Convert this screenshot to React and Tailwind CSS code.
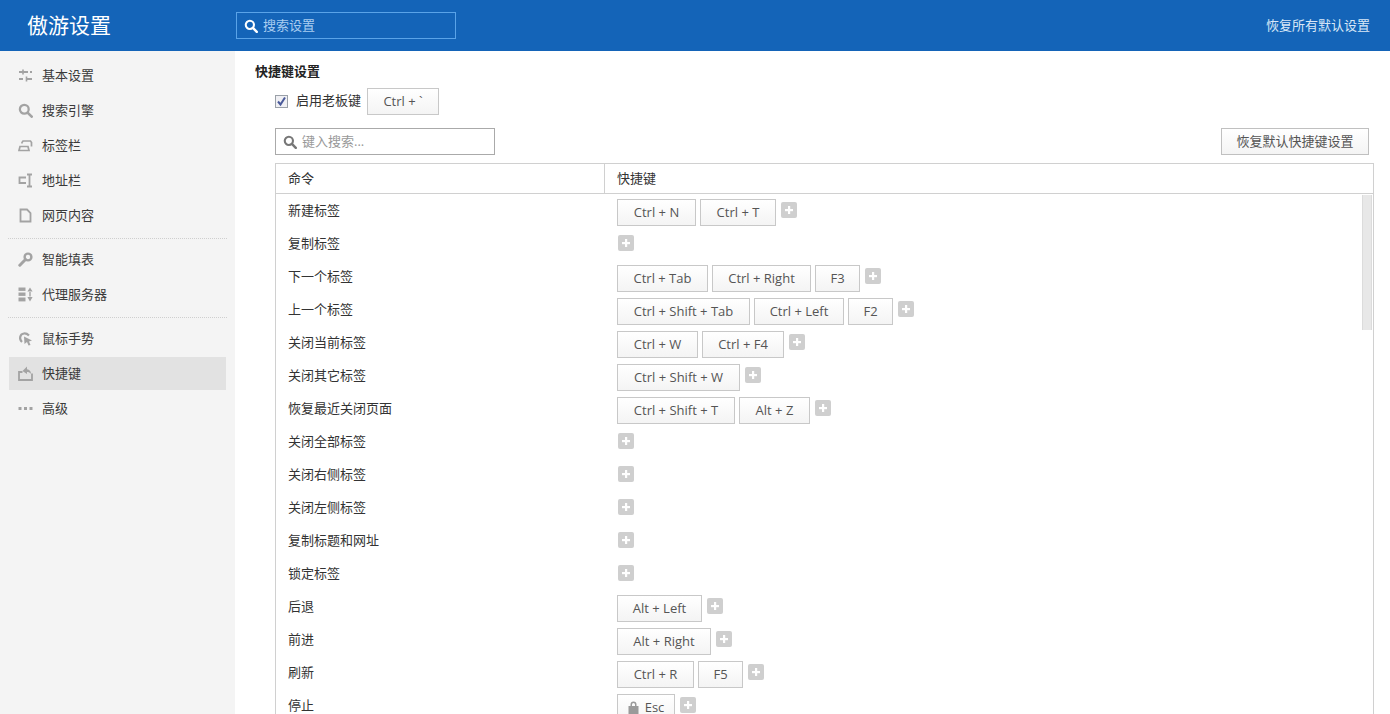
import React from "react";

const Search = ({ c = "currentColor", s = 15 }) => (
  <svg width={s} height={s} viewBox="0 0 16 16" fill="none" className="shrink-0">
    <circle cx="6.7" cy="6.7" r="4.7" stroke={c} strokeWidth="2.4" />
    <path d="M10.2 10.2L14.6 14.6" stroke={c} strokeWidth="2.8" strokeLinecap="round" />
  </svg>
);

const G = "#a3a3a3";
const icons = {
  sliders: (
    <svg width="15" height="15" viewBox="0 0 15 15" fill="none" stroke={G} strokeWidth="2">
      <path d="M1 4h9M1 11h4M9 11h5M12 4h2" />
      <path d="M5 1.5v5M8.5 8.5v5" strokeWidth="1.6" />
    </svg>
  ),
  search: <Search c={G} s={15} />,
  tabs: (
    <svg width="15" height="15" viewBox="0 0 15 15" fill="none" stroke={G} strokeWidth="1.7">
      <path d="M4 5.5V4.4L5 3h7.5l1 1.4V8.5" />
      <path d="M1 12.5l1-4h8l1 4z" fill="none" />
    </svg>
  ),
  addr: (
    <svg width="15" height="15" viewBox="0 0 15 15" fill="none" stroke={G} strokeWidth="1.8">
      <path d="M8 4.5H1.5v5.5H8" />
      <path d="M9 1.5h5M11.5 1.5v12M9 13.5h5" />
    </svg>
  ),
  page: (
    <svg width="15" height="15" viewBox="0 0 15 15" fill="none" stroke={G} strokeWidth="1.8">
      <path d="M2.5 1.5h6.5l3.5 3.5v8.5h-10z" />
    </svg>
  ),
  key: (
    <svg width="15" height="15" viewBox="0 0 15 15" fill="none">
      <circle cx="10" cy="5" r="3.4" stroke={G} strokeWidth="2.4" />
      <path d="M7.5 7.5L1.8 13.2" stroke={G} strokeWidth="3" strokeLinecap="round" />
    </svg>
  ),
  proxy: (
    <svg width="15" height="15" viewBox="0 0 15 15" fill={G}>
      <rect x="0.5" y="0.5" width="7" height="3.4" />
      <rect x="0.5" y="5.5" width="7" height="3.4" />
      <rect x="0.5" y="10.5" width="7" height="3.9" />
      <path d="M12 0.5l2.6 4h-5.2zM9.4 10h5.2L12 14.5z" />
      <rect x="11.3" y="5" width="1.4" height="4.5" />
    </svg>
  ),
  mouse: (
    <svg width="15" height="15" viewBox="0 0 15 15" fill="none">
      <path d="M4 11C1 8.5 1.500 3 6 2.500c2-.2 3.500.5 5 2" stroke={G} strokeWidth="2.200" />
      <path d="M6 5.500l8 4-3 1 1.500 3.500-2 .5-1.500-3.500-2.500 2z" fill={G} />
    </svg>
  ),
  shortcut: (
    <svg width="15" height="15" viewBox="0 0 15 15" fill="none">
      <path d="M4.500 6H1v8h13V7.500" stroke={G} strokeWidth="1.800" />
      <path d="M9 .5L4.500 5 9 8V6c1.500 0 3 .5 4 2C13 5 11.500 3.500 9 3.200z" fill={G} />
    </svg>
  ),
  more: (
    <svg width="15" height="15" viewBox="0 0 15 15" fill={G}>
      <rect x="0.5" y="6" width="3" height="3" />
      <rect x="6" y="6" width="3" height="3" />
      <rect x="11.500" y="6" width="3" height="3" />
    </svg>
  ),
};

const navGroups = [
  [["sliders", "基本设置"], ["search", "搜索引擎"], ["tabs", "标签栏"], ["addr", "地址栏"], ["page", "网页内容"]],
  [["key", "智能填表"], ["proxy", "代理服务器"]],
  [["mouse", "鼠标手势"], ["shortcut", "快捷键", true], ["more", "高级"]],
];

const rows = [
  ["新建标签", [["Ctrl + N", 79], ["Ctrl + T", 76]]],
  ["复制标签", []],
  ["下一个标签", [["Ctrl + Tab", 91], ["Ctrl + Right", 99], ["F3", 45]]],
  ["上一个标签", [["Ctrl + Shift + Tab", 133], ["Ctrl + Left", 90], ["F2", 45]]],
  ["关闭当前标签", [["Ctrl + W", 81], ["Ctrl + F4", 82]]],
  ["关闭其它标签", [["Ctrl + Shift + W", 123]]],
  ["恢复最近关闭页面", [["Ctrl + Shift + T", 118], ["Alt + Z", 71]]],
  ["关闭全部标签", []],
  ["关闭右侧标签", []],
  ["关闭左侧标签", []],
  ["复制标题和网址", []],
  ["锁定标签", []],
  ["后退", [["Alt + Left", 85]]],
  ["前进", [["Alt + Right", 94]]],
  ["刷新", [["Ctrl + R", 77], ["F5", 45]]],
  ["停止", [["Esc", 58, true]]],
];

const Key = ({ label, w, lock }) => (
  <div
    style={{ width: w }}
    className="h-[27px] shrink-0 flex items-center justify-center gap-[6px] border border-[#c8c8c8] bg-gradient-to-b from-white to-[#f4f4f4] text-[#555] text-[13px] leading-none"
  >
    {lock && (
      <svg width="11" height="13" viewBox="0 0 11 13" fill="#9a9a9a">
        <path d="M2.500 5V3.500a3 3 0 0 1 6 0V5H10.500v8H.5V5zM4 5h3V3.500a1.500 1.500 0 0 0-3 0z" />
      </svg>
    )}
    {label}
  </div>
);

const Plus = ({ mt }) => (
  <div className={`w-4 h-4 shrink-0 bg-[#cfcfcf] rounded-[2px] flex items-center justify-center ${mt}`}>
    <svg width="10" height="10" viewBox="0 0 10 10" fill="white">
      <rect x="4" y="1" width="2.200" height="8" />
      <rect x="1" y="4" width="8" height="2.200" />
    </svg>
  </div>
);

export default function App() {
  return (
    <div className="w-[1390px] h-[714px] overflow-hidden flex flex-col bg-white text-[13px] text-[#333] font-['Open_Sans','Noto_Sans_CJK_SC',sans-serif]">
      <header className="h-[51px] shrink-0 bg-[#1464b8] flex items-center text-white">
        <div className="w-[236px] shrink-0 pl-[27px] text-[21px] leading-none">傲游设置</div>
        <div className="w-[220px] h-[27px] border border-[#5aa3e8] flex items-center pl-[7px] gap-[5px] text-[#a9cdf0]">
          <Search c="#ffffff" s={14} />
          <span>搜索设置</span>
        </div>
        <div className="ml-auto pr-[20px] text-[#d9e8f7]">恢复所有默认设置</div>
      </header>
      <div className="flex flex-1 min-h-0">
        <aside className="w-[235px] shrink-0 bg-[#f4f4f4] pt-[8px] text-[#3a3a3a]">
          {navGroups.map((g, i) => (
            <div key={i} className={i < 2 ? "ml-[8px] mr-[8px] border-b border-dotted border-[#cfcfcf] pb-[4px] mb-[4px]" : "ml-[8px] mr-[8px]"}>
              {g.map(([ic, label, active]) => (
                <div
                  key={label}
                  className={`h-[33px] mb-[2px] w-[217px] ml-px flex items-center gap-[9px] pl-[9px] ${active ? "bg-[#e2e2e2]" : ""}`}
                >
                  {icons[ic]}
                  <span>{label}</span>
                </div>
              ))}
            </div>
          ))}
        </aside>
        <main className="flex-1 min-w-0 pl-[20px] pt-[11px] pr-[16px]">
          <h2 className="font-bold text-[13px] leading-[18px] text-[#222]">快捷键设置</h2>
          <div className="ml-[20px] mt-[8px] flex items-center h-[26px]">
            <span className="w-[13px] h-[13px] border border-[#9aa0a8] bg-[#f0f0f4] flex items-center justify-center">
              <svg width="11" height="11" viewBox="0 0 11 11" fill="none" stroke="#4a5a9a" strokeWidth="2">
                <path d="M2 5.500l2.500 3L9 1.500" />
              </svg>
            </span>
            <span className="ml-[8px]">启用老板键</span>
            <div className="ml-[6px]"><Key label="Ctrl + `" w={72} /></div>
          </div>
          <div className="ml-[20px] mt-[14px] mr-[5px] flex justify-between">
            <div className="w-[220px] h-[27px] border border-[#aaaaaa] flex items-center pl-[7px] gap-[5px] text-[#999]">
              <Search c="#777777" s={14} />
              <span>键入搜索...</span>
            </div>
            <div className="w-[148px] h-[27px] border border-[#c0c0c0] bg-gradient-to-b from-white to-[#f4f4f4] flex items-center justify-center text-[#555]">
              恢复默认快捷键设置
            </div>
          </div>
          <div className="ml-[20px] mt-[8px] w-[1099px] border border-[#d0d0d0] relative">
            <div className="h-[30px] border-b border-[#d0d0d0] flex items-center">
              <div className="w-[329px] h-full border-r border-[#d0d0d0] pl-[12px] flex items-center">命令</div>
              <div className="pl-[12px]">快捷键</div>
            </div>
            <div className="pt-[5px]">
              {rows.map(([name, keys]) => (
                <div key={name} className="h-[33px] flex">
                  <div className="w-[341px] shrink-0 pl-[12px] pt-[3px] leading-[16px]">{name}</div>
                  <div className={`flex gap-[4px] ${keys.length ? "" : "pl-px"}`}>
                    {keys.map(([l, w, lock]) => (
                      <Key key={l} label={l} w={w} lock={lock} />
                    ))}
                    <Plus mt={keys.length ? "mt-[3px] ml-px" : "mt-[3px]"} />
                  </div>
                </div>
              ))}
            </div>
            <div className="absolute right-[1px] top-[31px] w-[10px] h-[135px] bg-[#e8e8e8] border-x border-[#dcdcdc]" />
          </div>
        </main>
      </div>
    </div>
  );
}
